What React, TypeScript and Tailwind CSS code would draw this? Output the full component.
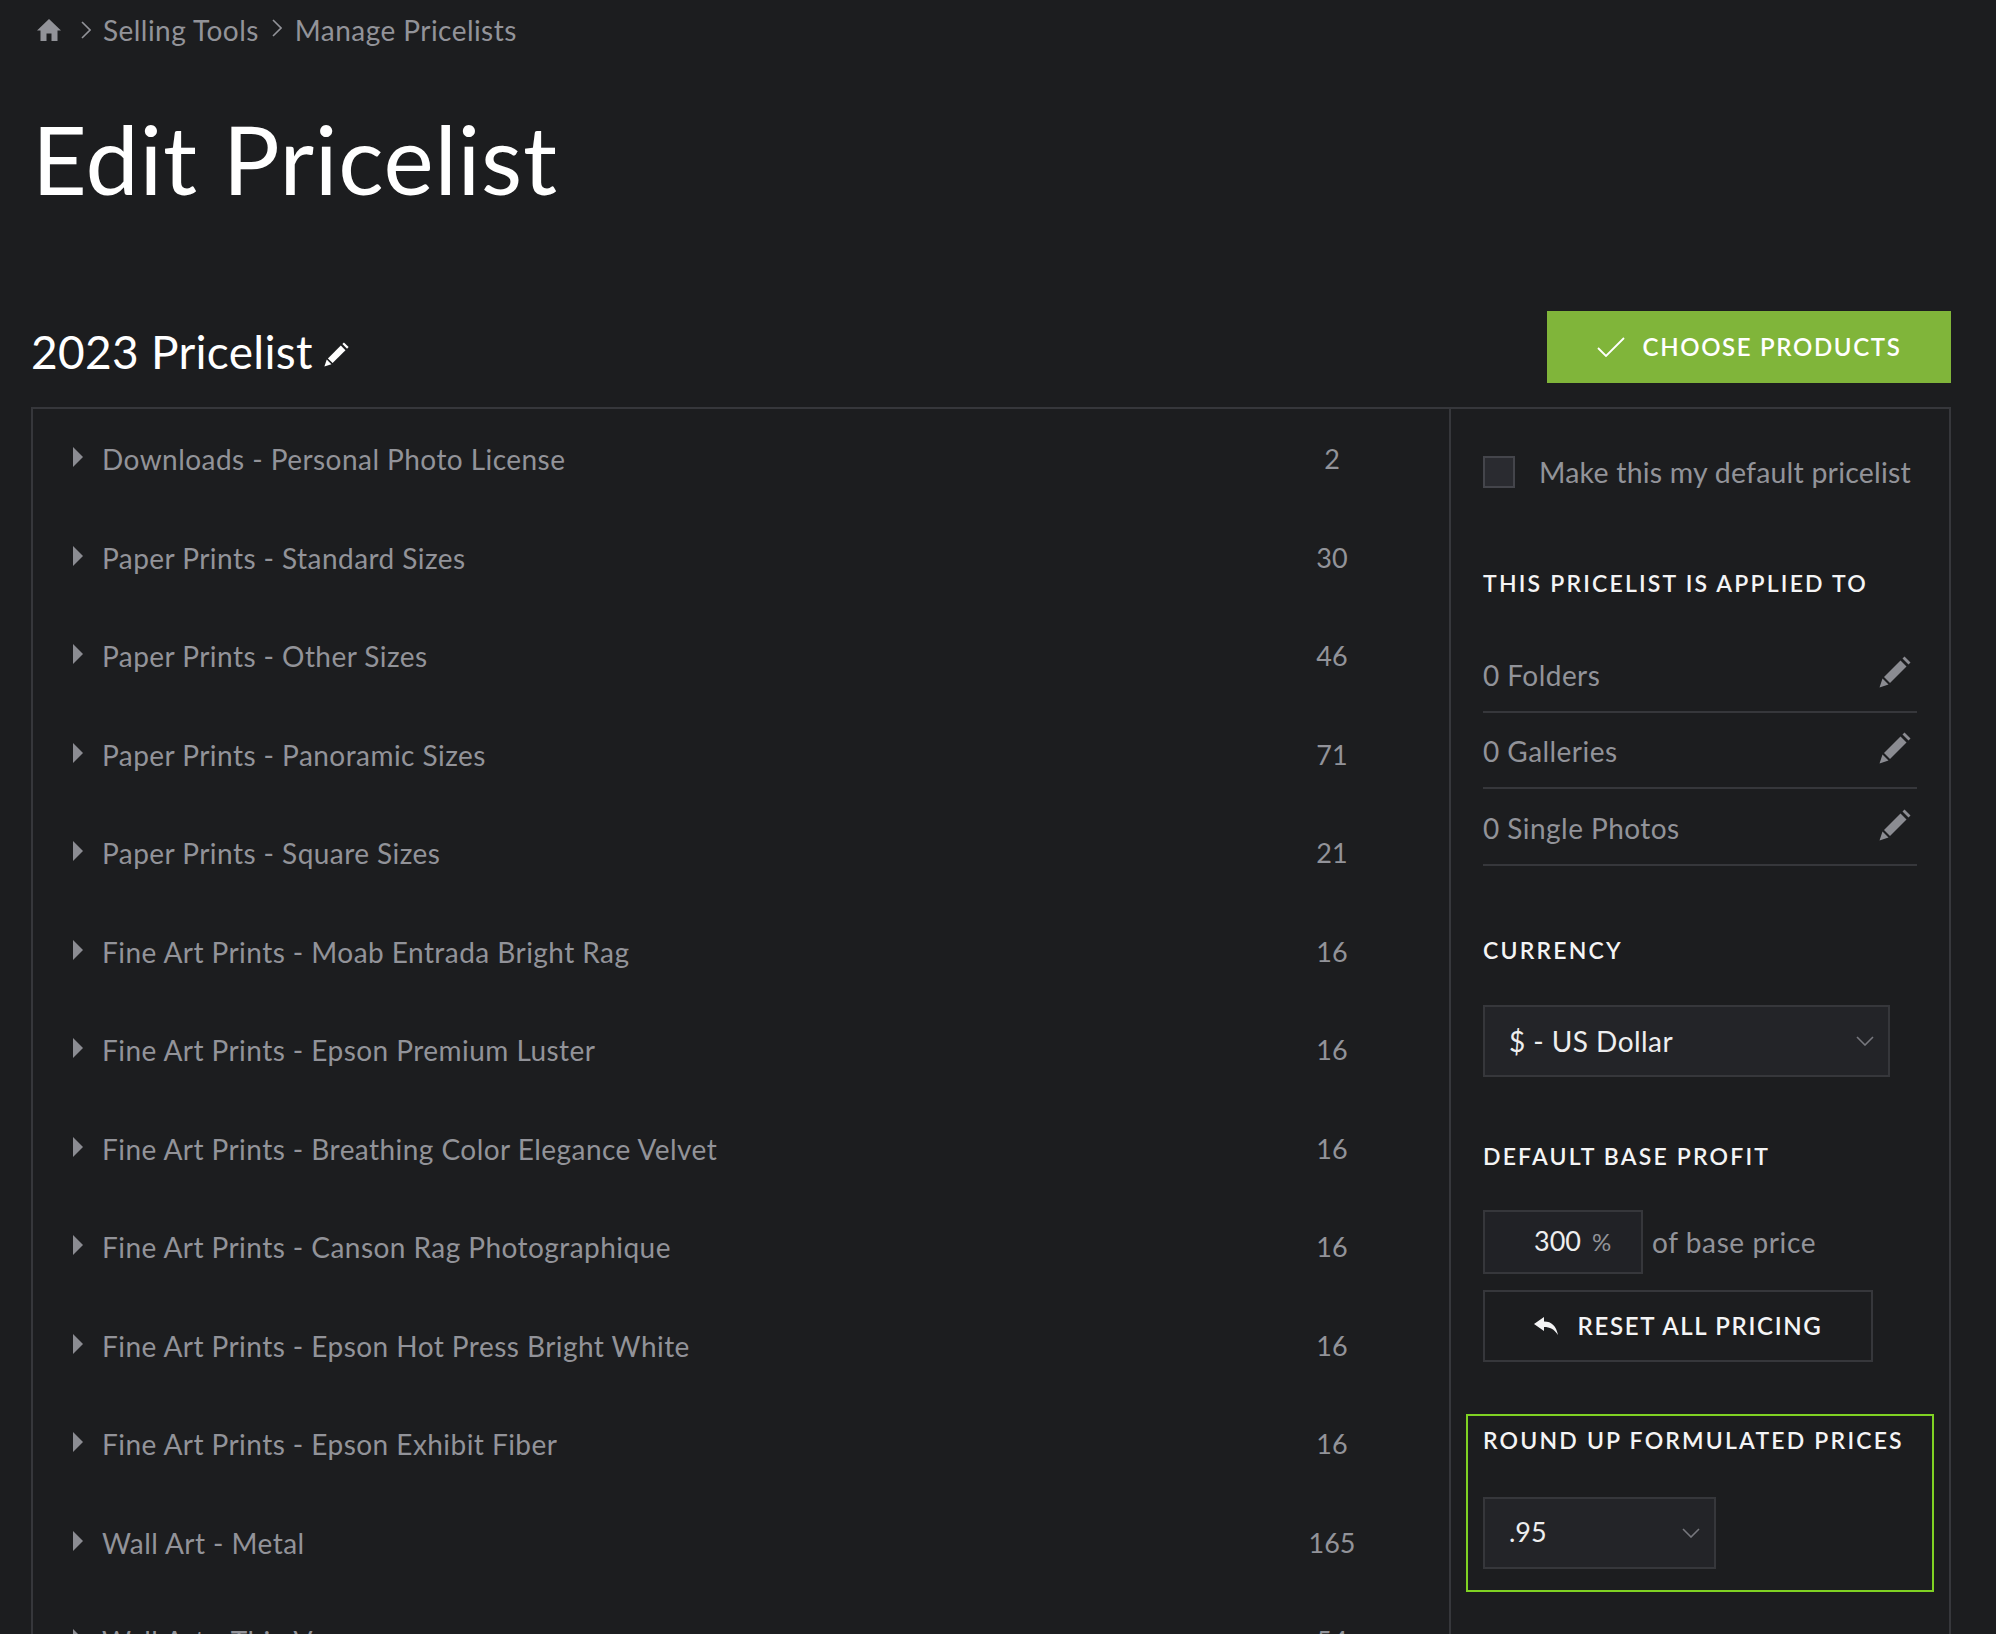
import React from "react";

const rows: [string, string][] = [
  ["Downloads - Personal Photo License", "2"],
  ["Paper Prints - Standard Sizes", "30"],
  ["Paper Prints - Other Sizes", "46"],
  ["Paper Prints - Panoramic Sizes", "71"],
  ["Paper Prints - Square Sizes", "21"],
  ["Fine Art Prints - Moab Entrada Bright Rag", "16"],
  ["Fine Art Prints - Epson Premium Luster", "16"],
  ["Fine Art Prints - Breathing Color Elegance Velvet", "16"],
  ["Fine Art Prints - Canson Rag Photographique", "16"],
  ["Fine Art Prints - Epson Hot Press Bright White", "16"],
  ["Fine Art Prints - Epson Exhibit Fiber", "16"],
  ["Wall Art - Metal", "165"],
  ["Wall Art - Thin V", "54"],
];

function Pencil({ className }: { className: string }) {
  return (
    <svg viewBox="0 0 32 32" className={className} fill="currentColor">
      <path d="M0.5 31.5 L3.5 22.5 L9.5 28.5 Z" />
      <path d="M5 21 L21.5 4.5 L27.5 10.5 L11 27 Z" />
      <path d="M23.5 2.5 L25.5 0.5 L31.5 6.5 L29.5 8.5 Z" />
    </svg>
  );
}

function Chevron({ className }: { className: string }) {
  return (
    <svg viewBox="0 0 18 10" className={className} fill="none" stroke="currentColor" strokeWidth="1.6">
      <path d="M1 1 L9 9 L17 1" />
    </svg>
  );
}

function Heading({ children }: { children: React.ReactNode }) {
  return (
    <div className="text-[23px] leading-[28px] font-semibold tracking-[0.095em] text-[#f4f4f5] whitespace-nowrap">
      {children}
    </div>
  );
}

function Applied({ label }: { label: string }) {
  return (
    <div className="flex h-[76.5px] items-center justify-between border-b-2 border-[#36373b] pr-[6px] pt-[3px]">
      <span className="text-[28px] tracking-[0.45px] text-[#929399]">{label}</span>
      <Pencil className="mb-[6px] h-[32px] w-[32px] text-[#8b8c92]" />
    </div>
  );
}

export default function App() {
  return (
    <div className="h-[1634px] w-[1996px] overflow-hidden bg-[#1c1d1f] font-[family-name:Lato,sans-serif]">
      <div className="flex h-[60px] items-center pl-[37px] text-[28px] tracking-[0.45px] text-[#929399]">
        <svg viewBox="0 0 24 22" className="h-[22px] w-[24px]" fill="currentColor">
          <path d="M12 0 L24 11.5 L20.5 11.5 L20.5 22 L14.5 22 L14.5 14.5 L9.5 14.5 L9.5 22 L3.5 22 L3.5 11.5 L0 11.5 Z" />
        </svg>
        <svg viewBox="0 0 10 18" className="ml-[20px] h-[18px] w-[10px]" fill="none" stroke="currentColor" strokeWidth="1.6">
          <path d="M1 1 L9 9 L1 17" />
        </svg>
        <span className="ml-[12px]">Selling Tools</span>
        <svg viewBox="0 0 10 18" className="mb-[4px] ml-[13px] h-[18px] w-[10px]" fill="none" stroke="currentColor" strokeWidth="1.6">
          <path d="M1 1 L9 9 L1 17" />
        </svg>
        <span className="ml-[13px]">Manage Pricelists</span>
      </div>

      <h1 className="mt-[43px] pl-[32px] text-[95px] leading-[110px] tracking-[0.7px] text-white">Edit Pricelist</h1>

      <div className="mt-[98px] flex h-[72px] items-center justify-between pl-[31px] pr-[45px]">
        <div className="mt-[9px] flex items-center text-[46px] tracking-[0.3px] text-white">
          <span>2023 Pricelist</span>
          <Pencil className="ml-[11px] mt-[6px] h-[25px] w-[25px]" />
        </div>
        <div className="flex h-[72px] w-[404px] items-center justify-center gap-[18px] bg-[#80b53a] text-[24px] font-semibold tracking-[1.65px] text-white">
          <svg viewBox="0 0 28 20" className="h-[20px] w-[28px]" fill="none" stroke="currentColor" strokeWidth="1.8">
            <path d="M1 11 L9 19 L27 1" />
          </svg>
          <span>CHOOSE PRODUCTS</span>
        </div>
      </div>

      <div className="ml-[31px] mt-[24px] flex h-[1300px] w-[1920px] border-2 border-[#36373b]">
        <div className="flex-1 border-r-2 border-[#36373b] pt-[1px]">
          {rows.map(([name, count]) => (
            <div key={name} className="flex h-[98.5px] items-center pl-[40px] pr-[57px] text-[28px] text-[#929399]">
              <svg viewBox="0 0 10 20" className="mb-[4px] h-[20px] w-[10px] text-[#8b8c92]" fill="currentColor">
                <path d="M0 0 L10 10 L0 20 Z" />
              </svg>
              <span className="ml-[19px] flex-1 tracking-[0.45px]">{name}</span>
              <span className="w-[120px] text-center text-[27px]">{count}</span>
            </div>
          ))}
        </div>

        <div className="w-[498px] pl-[32px] pt-[46px]">
          <div className="flex h-[34px] items-center">
            <div className="h-[32px] w-[32px] border-2 border-[#44454b] bg-[#2a2b30]" />
            <span className="ml-[24px] text-[28.5px] tracking-[0.2px] text-[#929399]">Make this my default pricelist</span>
          </div>
          <div className="mt-[80px]">
            <Heading>THIS PRICELIST IS APPLIED TO</Heading>
          </div>
          <div className="mt-[39px] w-[434px]">
            <Applied label="0 Folders" />
            <Applied label="0 Galleries" />
            <Applied label="0 Single Photos" />
          </div>
          <div className="mt-[70px]">
            <Heading>CURRENCY</Heading>
          </div>
          <div className="mt-[41px] flex h-[72px] w-[407px] items-center justify-between border-2 border-[#36373b] bg-[#232428] pl-[24px] pr-[14px] text-[28px] tracking-[0.45px] text-[#eeeeef]">
            <span>$ - US Dollar</span>
            <Chevron className="h-[10px] w-[18px] text-[#77787e]" />
          </div>
          <div className="mt-[65px]">
            <Heading>DEFAULT BASE PROFIT</Heading>
          </div>
          <div className="mt-[40px] flex h-[64px] items-center">
            <div className="flex h-[64px] w-[160px] items-center border-2 border-[#36373b] bg-[#212226] pl-[49px] text-[27px] text-[#eeeeef]">
              <span>300</span>
              <span className="ml-[11px] text-[24px] text-[#929399]">%</span>
            </div>
            <span className="ml-[9px] text-[28px] tracking-[0.6px] text-[#929399]">of base price</span>
          </div>
          <div className="mt-[16px] flex h-[72px] w-[390px] items-center justify-center gap-[20px] border-2 border-[#36373b] text-[24px] font-semibold tracking-[1.65px] text-[#f4f4f5]">
            <svg viewBox="0 0 24 18" className="h-[18px] w-[24px]" fill="currentColor">
              <path d="M0 7 L10 0 L10 4.5 C18 4.5 22 9 24 18 C20 12 16 10 10 10 L10 14 Z" />
            </svg>
            <span>RESET ALL PRICING</span>
          </div>
          <div className="-ml-[17px] mt-[52px] h-[178px] w-[468px] border-2 border-[#7fd223] pl-[15px] pt-[10px]">
            <Heading>ROUND UP FORMULATED PRICES</Heading>
            <div className="mt-[43px] flex h-[72px] w-[233px] items-center justify-between border-2 border-[#36373b] bg-[#232428] pl-[24px] pr-[14px] text-[27px] text-[#eeeeef]">
              <span>.95</span>
              <Chevron className="h-[10px] w-[18px] text-[#77787e]" />
            </div>
          </div>
        </div>
      </div>
    </div>
  );
}
